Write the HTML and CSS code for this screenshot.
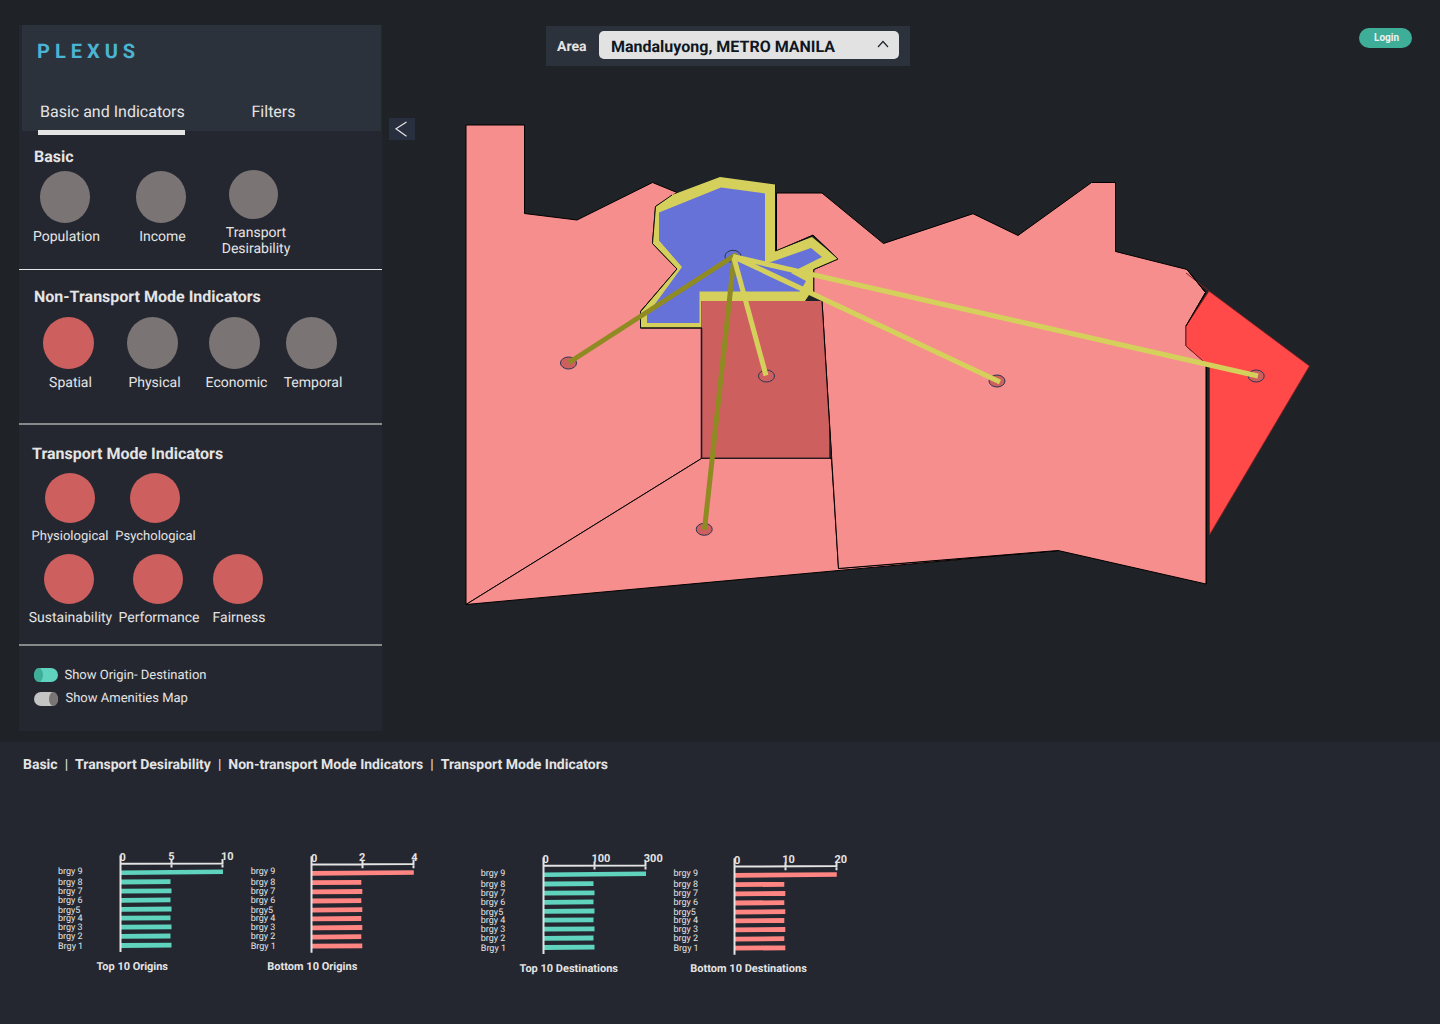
FILE: index.html
```html
<!DOCTYPE html>
<html lang="en">
<head>
<meta charset="utf-8">
<title>Plexus</title>
<link rel="stylesheet" href="styles.css">
</head>
<body>
<div class="app">
  <div class="workspace">
    <aside class="sidebar">
      <header class="sidebar-head">
        <h1 class="logo">PLEXUS</h1>
        <nav class="tabs">
          <a class="tab tab-active">Basic and Indicators</a>
          <a class="tab">Filters</a>
        </nav>
      </header>

      <section class="group group-basic">
        <h2 class="group-title">Basic</h2>
        <div class="dots">
          <div class="dot-item population"><i class="dot"></i><span class="dot-label">Population</span></div>
          <div class="dot-item income"><i class="dot"></i><span class="dot-label">Income</span></div>
          <div class="dot-item desirability"><i class="dot"></i><span class="dot-label">Transport<br>Desirability</span></div>
        </div>
      </section>

      <section class="group group-nontransport">
        <h2 class="group-title">Non-Transport Mode Indicators</h2>
        <div class="dots">
          <div class="dot-item spatial"><i class="dot dot-on"></i><span class="dot-label">Spatial</span></div>
          <div class="dot-item physical"><i class="dot"></i><span class="dot-label">Physical</span></div>
          <div class="dot-item economic"><i class="dot"></i><span class="dot-label">Economic</span></div>
          <div class="dot-item temporal"><i class="dot"></i><span class="dot-label">Temporal</span></div>
        </div>
      </section>

      <section class="group group-transport">
        <h2 class="group-title">Transport Mode Indicators</h2>
        <div class="dots dots-first">
          <div class="dot-item physiological"><i class="dot dot-on"></i><span class="dot-label">Physiological</span></div>
          <div class="dot-item psychological"><i class="dot dot-on"></i><span class="dot-label">Psychological</span></div>
        </div>
        <div class="dots dots-second">
          <div class="dot-item sustainability"><i class="dot dot-on"></i><span class="dot-label">Sustainability</span></div>
          <div class="dot-item performance"><i class="dot dot-on"></i><span class="dot-label">Performance</span></div>
          <div class="dot-item fairness"><i class="dot dot-on"></i><span class="dot-label">Fairness</span></div>
        </div>
      </section>

      <section class="switches">
        <div class="switch-row">
          <span class="switch switch-on"><i class="knob"></i></span>
          <span class="switch-label">Show Origin- Destination</span>
        </div>
        <div class="switch-row">
          <span class="switch"><i class="knob"></i></span>
          <span class="switch-label amenities">Show Amenities Map</span>
        </div>
      </section>
    </aside>

    <button class="collapse" aria-label="Collapse">
      <svg width="26" height="22" viewBox="0 0 26 22"><path d="M17.500 4 7 10.800l10.500 7.400" fill="none" stroke="#e4e4e4" stroke-width="1.200"/></svg>
    </button>

    <main class="stage">
      <div class="topbar">
        <div class="area">
          <span class="area-label">Area</span>
          <div class="select">
            <span class="select-value">Mandaluyong, METRO MANILA</span>
            <svg class="select-arrow" width="12" height="8" viewBox="0 0 12 8"><path d="M1 7l5-5.500 5 5.500" fill="none" stroke="#20242a" stroke-width="1.200"/></svg>
          </div>
        </div>
        <button class="login">Login</button>
      </div>
      <svg class="map" width="1025" height="676" viewBox="415 66 1025 676">
        <g fill="#f68e8d" stroke="#000" stroke-width="1">
          <path d="M466 125H524.500V213.500L577 220 652.500 182.500 677 192.500 655.500 206.500 652.500 243.500 677 269 640.500 311.500V328H701.500V458.500L466 604.500Z"/>
          <path d="M466 604.500 701.500 458.500H831.500L838.500 568.500 1058 550.500Z"/>
          <path d="M776.500 193H822L883.500 243.500 973 213.700 1018 235.500 1091.500 182.500H1115.500V251.500L1187 269.500 1205.500 292.500 1186 326V346L1206 363V584L1058 550.500 838.500 568.500 822 301 813.700 298V269.500L838 259 813 235 776.500 251Z"/>
        </g>
        <path d="M805 301 809 294 822 301Z" fill="#1f2226"/>
        <path d="M655.500 206.500 672 195 720 177 775 184.500V251L812 237 838.500 259 813.700 269.500V292L809 295 805 301H701.500V327.500H641V311.500L677 269 652.500 243.500Z" fill="#d4d05b"/>
        <path d="M655.500 206.500 672 195M677 269 640.500 311.500V328H701.500M655.500 206.500 652.500 243.500 677 269M775.500 185V251L813 235.500 838 259 813.700 269.500V292" fill="none" stroke="#111" stroke-width="1"/>
        <path d="M659 212.500 721 187.500 765 193.500V262H771L811 248 822 257 799 268.500 791 273 806 281 800 291.500H699.500V323H647V315L682 267 659 240.500Z" fill="#6672d8"/>
        <path d="M702 301H822L829.500 425V458H702Z" fill="#cd5f5e"/>
        <path d="M701.500 328V458.500" stroke="#1f1a1e" stroke-width="1.600"/>
        <path d="M822 301 831.500 458" stroke="#000" stroke-width="1"/>
        <path d="M829.500 425 831.600 458H829.500Z" fill="#1f2226"/>
        <path d="M702 458.200H830" fill="none" stroke="#3b2226" stroke-width="1.300"/>
        <path d="M1186 273 1209 291 1309.500 366 1209.500 535V367L1203 361 1186 346V326L1209 291" fill="#ff4a49" stroke="#7a2023" stroke-width="1"/>
        <path d="M1207.500 366V535" stroke="#1f2226" stroke-width="2.600"/>
        <path d="M1206.500 364V584M1187 269.500 1205.500 292.500 1186 326" fill="none" stroke="#000"/>
        <g fill="#cd5f5e" stroke="#2c3552" stroke-width="1">
          <ellipse cx="568.500" cy="363" rx="8" ry="6"/>
          <ellipse cx="766.500" cy="376" rx="8" ry="6"/>
          <ellipse cx="997" cy="381" rx="8" ry="6"/>
          <ellipse cx="1256.200" cy="376" rx="8" ry="6"/>
          <ellipse cx="704.200" cy="529.300" rx="8" ry="6"/>
          <ellipse cx="733" cy="256.300" rx="8" ry="6" fill="none"/>
        </g>
        <g fill="none" stroke-width="5">
          <path d="M737 254 569 362.500M734 258 704.500 529.500" stroke="#8f8b22"/>
          <path d="M734 258 766 375.500M733 256.500 1000 382M733 256.500 1258 376" stroke="#d4d05b"/>
        </g>
      </svg>
    </main>
  </div>

  <section class="details">
    <nav class="crumbs"><a>Basic</a><i>|</i><a>Transport Desirability</a><i>|</i><a>Non-transport Mode Indicators</a><i>|</i><a>Transport Mode Indicators</a></nav>
    <div class="charts">
      <svg class="chart chart-teal" width="191" height="130" viewBox="50 850 191 130">
        <defs>
          <path id="bars" d="M0 6.400 102 5.500V10L0 11ZM0 15.600 49.500 15.200V20L0 20.400ZM0 24.800 50.500 24.400V29.200L0 29.600ZM0 33.900 49.500 33.500V38.300L0 38.700ZM0 43 50.500 42.600V47.400L0 47.800ZM0 51.800 49.500 51.400V56.200L0 56.600ZM0 60.800 50.500 60.400V65.200L0 65.600ZM0 70 49.500 69.600V74.400L0 74.800ZM0 79.100 50.500 78.700V83.500L0 83.900Z"/>
          <path id="axis" d="M-.5-8.500V88M-1-.2 102.500-.6M50.500-4.500V3.500M101.500-5V3.500"/>
        </defs>
        <use href="#bars" class="bars" x="121" y="864"/>
        <use href="#axis" class="axis" x="121" y="864"/>
        <g class="ticks"><text x="119.500" y="861">0</text><text x="168.200" y="860">5</text><text x="221" y="860">10</text></g>
        <g class="names">
          <text x="58" y="874">brgy 9</text><text x="58" y="884.500">brgy 8</text><text x="58" y="893.700">brgy 7</text><text x="58" y="902.800">brgy 6</text><text x="58" y="912.500">brgy5</text><text x="58" y="921.300">brgy 4</text><text x="58" y="930.200">brgy 3</text><text x="58" y="939.200">brgy 2</text><text x="58" y="948.500">Brgy 1</text>
        </g>
        <text class="caption" x="96.500" y="970.300" textLength="71.500">Top 10 Origins</text>
      </svg>
      <svg class="chart chart-red" width="232" height="130" viewBox="241 850 232 130">
        <use href="#bars" class="bars" x="311.800" y="864.700"/>
        <use href="#axis" class="axis" x="312" y="864.700"/>
        <g class="ticks"><text x="311" y="861.500">0</text><text x="359" y="861">2</text><text x="411.300" y="861">4</text></g>
        <g class="names">
          <text x="250.700" y="874">brgy 9</text><text x="250.700" y="884.500">brgy 8</text><text x="250.700" y="893.700">brgy 7</text><text x="250.700" y="902.800">brgy 6</text><text x="250.700" y="912.500">brgy5</text><text x="250.700" y="921.300">brgy 4</text><text x="250.700" y="930.200">brgy 3</text><text x="250.700" y="939.200">brgy 2</text><text x="250.700" y="948.500">Brgy 1</text>
        </g>
        <text class="caption" x="267.300" y="970.300" textLength="90">Bottom 10 Origins</text>
      </svg>
      <svg class="chart chart-teal" width="191" height="130" viewBox="473 850 191 130">
        <use href="#bars" class="bars" x="544" y="866"/>
        <use href="#axis" class="axis" x="544" y="866"/>
        <g class="ticks"><text x="542.500" y="863">0</text><text x="591.500" y="862">100</text><text x="643.800" y="862">300</text></g>
        <g class="names">
          <text x="480.800" y="876.200">brgy 9</text><text x="480.800" y="886.500">brgy 8</text><text x="480.800" y="895.700">brgy 7</text><text x="480.800" y="904.800">brgy 6</text><text x="480.800" y="914.500">brgy5</text><text x="480.800" y="923.300">brgy 4</text><text x="480.800" y="932.200">brgy 3</text><text x="480.800" y="941.200">brgy 2</text><text x="480.800" y="950.500">Brgy 1</text>
        </g>
        <text class="caption" x="519.500" y="972.300" textLength="98.500">Top 10 Destinations</text>
      </svg>
      <svg class="chart chart-red" width="220" height="130" viewBox="664 850 220 130">
        <use href="#bars" class="bars" x="734.800" y="866.700"/>
        <use href="#axis" class="axis" x="735" y="866.700"/>
        <g class="ticks"><text x="734" y="863.500">0</text><text x="782.300" y="863">10</text><text x="834.500" y="863">20</text></g>
        <g class="names">
          <text x="673.500" y="876.200">brgy 9</text><text x="673.500" y="886.500">brgy 8</text><text x="673.500" y="895.700">brgy 7</text><text x="673.500" y="904.800">brgy 6</text><text x="673.500" y="914.500">brgy5</text><text x="673.500" y="923.300">brgy 4</text><text x="673.500" y="932.200">brgy 3</text><text x="673.500" y="941.200">brgy 2</text><text x="673.500" y="950.500">Brgy 1</text>
        </g>
        <text class="caption" x="690.300" y="972.300" textLength="116.500">Bottom 10 Destinations</text>
      </svg>
    </div>
  </section>
</div>
</body>
</html>
```
FILE: styles.css
```css
* { box-sizing: border-box; }
body { margin: 0; background: #1f2226; color: #e4e4e4; font-family: Roboto, sans-serif; text-rendering: geometricPrecision; }
h1, h2 { margin: 0; }
i { font-style: normal; }
button { border: 0; padding: 0; font-family: inherit; }
svg { display: block; }

.app { width: 1440px; height: 1024px; display: flex; flex-direction: column; overflow: hidden; }
.workspace { height: 742px; display: flex; align-items: flex-start; }

/* Sidebar */
.sidebar { width: 363px; height: 706px; margin: 25px 0 0 19px; background: #252730; display: flex; flex-direction: column; }
.sidebar-head { height: 106px; margin: 0 1px 0 3px; padding: 15px 0 0 15px; background: #2c323c; display: flex; flex-direction: column; justify-content: space-between; }
.logo { font-size: 20px; line-height: 23px; font-weight: 700; letter-spacing: 5px; color: #4bb4d3; }
.tabs { display: flex; gap: 67px; height: 33px; margin-left: 1px; }
.tab { font-size: 16px; line-height: 20px; height: 37px; padding-top: 4px; }
.tab-active { width: 146.500px; padding-left: 2px; white-space: nowrap; border-bottom: 5px solid #e4e4e4; }

.group { border-bottom: 2px solid #88898b; }
.group-title { font-size: 16px; line-height: 20px; font-weight: 700; }
.group-basic { height: 139px; padding: 16px 0 0 15px; border-bottom: 1px solid #e4e4e4; }
.group-nontransport { height: 155px; padding: 17px 0 0 15px; }
.group-transport { height: 221px; padding: 19px 0 0 13px; }
.dots { display: flex; align-items: flex-start; }
.dot-item { display: flex; flex-direction: column; align-items: center; flex: none; width: 50px; }
.dot { width: 50px; height: 50px; border-radius: 50%; background: #7a7574; flex: none; }
.dot-on { background: #cd5f5e; }
.dot-label { font-size: 14px; line-height: 16px; text-align: center; white-space: nowrap; margin-top: 6px; }

.group-basic .dots { padding: 4px 0 0 6px; gap: 46px; }
.group-basic .dot { height: 51.500px; }
.group-basic .dot-label { margin-left: 3px; }
.group-basic .desirability { margin: -1px 0 0 -3.500px; }
.group-basic .desirability .dot { width: 49px; height: 49px; }
.group-basic .desirability .dot-label { margin-left: 5px; }
.group-nontransport .dots { padding: 10px 0 0 9px; }
.group-nontransport .dot-item { width: 51.500px; }
.group-nontransport .dot { width: 51px; height: 52px; }
.group-nontransport .dot-label { margin: 5.500px 0 0 3.500px; }
.physical { margin-left: 32.500px; }
.economic { margin-left: 30px; }
.group-nontransport .economic .dot-label { margin-left: 4.500px; }
.temporal { margin-left: 25.500px; }
.group-transport .dots { padding: 9px 0 0 12.500px; }
.group-transport .dots-first .dot-label { font-size: 13px; margin: 6px 0 -1px 1px; }
.group-transport .dots-second { padding: 10px 0 0 12px; }
.psychological { margin-left: 35.500px; }
.performance { margin-left: 38.500px; }
.fairness { margin-left: 30px; }
.sustainability .dot-label, .performance .dot-label, .fairness .dot-label { margin-left: 3px; }

.switches { padding: 21px 0 0 15.300px; display: flex; flex-direction: column; gap: 8px; }
.switch-row { display: flex; align-items: center; height: 16px; gap: 6.500px; }
.switch { width: 23.700px; height: 14px; border-radius: 7px; background: #c4c4c4; display: flex; justify-content: flex-end; }
.knob { width: 9px; height: 14px; border-radius: 50%; background: #7a7574; }
.switch-on { background: #5fd3bd; justify-content: flex-start; }
.switch-on .knob { background: #3eae98; }
.switch-label { font-size: 13px; line-height: 16px; padding-top: 2px; }
.switch-label.amenities { padding: 0 0 0 1px; }

.collapse { width: 26px; height: 22px; margin: 118px 0 0 7px; background: #28303f; }

/* Map stage */
.stage { width: 1025px; display: flex; flex-direction: column; }
.topbar { height: 66px; padding: 26px 28px 0 131px; display: flex; justify-content: space-between; align-items: flex-start; }
.area { width: 364px; height: 40px; padding: 5px 11px; background: #2c323c; display: flex; justify-content: space-between; }
.area-label { font-size: 14px; line-height: 33px; font-weight: 700; }
.select { width: 300px; height: 28px; padding: 0 10px 0 12px; border-radius: 5px; background: #e2e2e2; display: flex; justify-content: space-between; }
.select-value { font-size: 16px; line-height: 31px; font-weight: 700; color: #0e1722; }
.select-arrow { margin-top: 9px; }
.login { width: 53px; height: 20px; margin-top: 2px; padding: 0 0 2px 2px; border-radius: 10px; background: #3eae98; color: #f0f0f0; font-size: 10px; font-weight: 700; }

/* Details */
.details { height: 282px; background: #252730; }
.crumbs { padding: 15px 0 0 23px; height: 108px; font-size: 14px; line-height: 16px; font-weight: 700; display: flex; gap: 7px; }
.crumbs i { font-weight: 400; }
.charts { display: flex; padding-left: 50px; }
.axis { fill: none; stroke: #e4e4e4; stroke-width: 2; }
.chart text { fill: #e4e4e4; }
.chart-teal .bars { fill: #5fd3bd; }
.chart-red .bars { fill: #ff8583; }
.chart .ticks { font-size: 11px; font-weight: 700; }
.chart .names { font-size: 9px; }
.chart .caption { font-size: 11px; font-weight: 700; }
```
